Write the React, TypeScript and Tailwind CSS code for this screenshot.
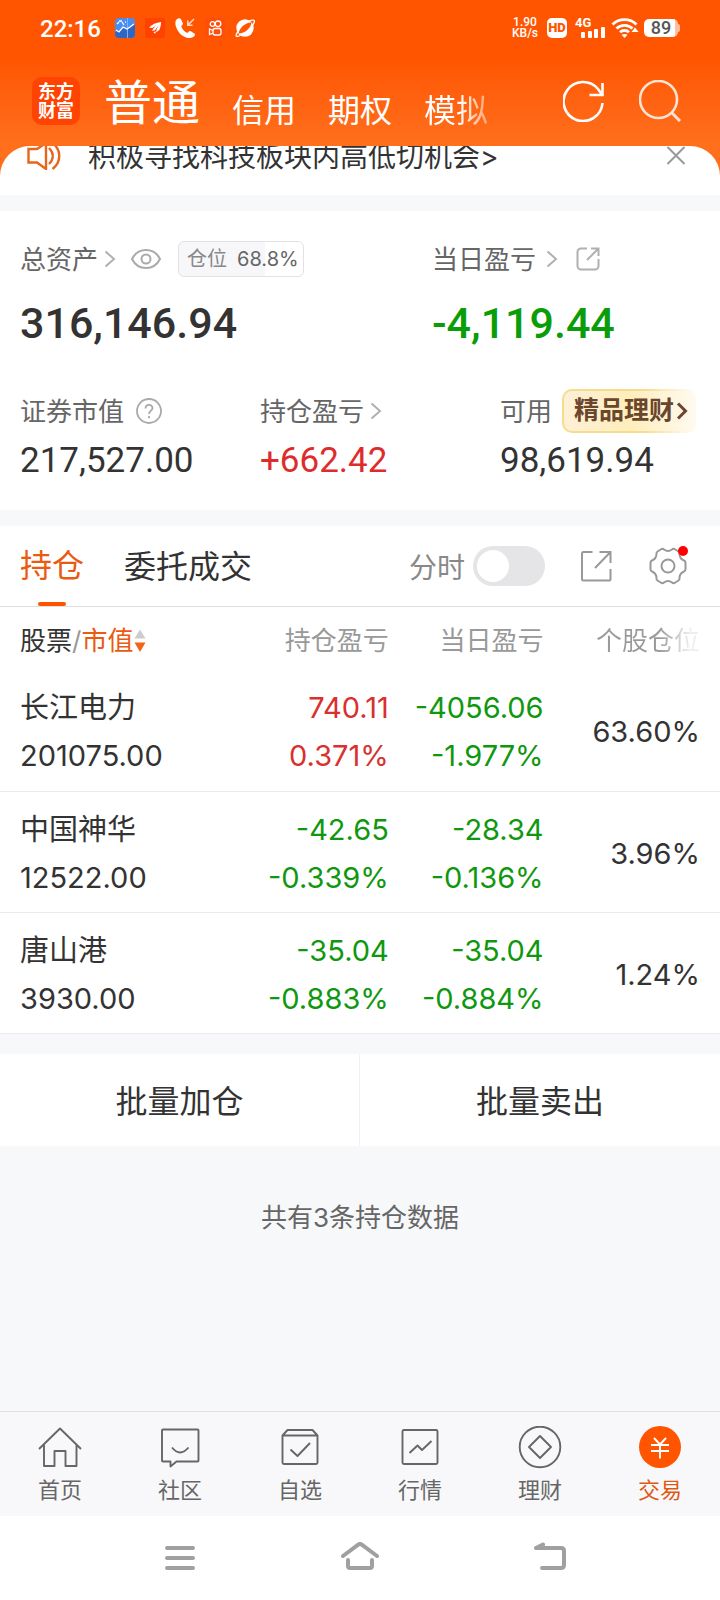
import React from "react";

type Tone = "up" | "down";
type Holding = {
  name: string;
  value: string;
  total: [string, string, Tone];
  today: [string, string, Tone];
  share: string;
};

const holdings: Holding[] = [
  { name: "长江电力", value: "201075.00", total: ["740.11", "0.371%", "up"], today: ["-4056.06", "-1.977%", "down"], share: "63.60%" },
  { name: "中国神华", value: "12522.00", total: ["-42.65", "-0.339%", "down"], today: ["-28.34", "-0.136%", "down"], share: "3.96%" },
  { name: "唐山港", value: "3930.00", total: ["-35.04", "-0.883%", "down"], today: ["-35.04", "-0.884%", "down"], share: "1.24%" },
];

const tones: Record<Tone, string> = { up: "text-[#d93030]", down: "text-[#0f980f]" };

function StatusBar() {
  return (
    <div className="flex h-14 items-center justify-between pr-10 pl-10 font-[Roboto,'Noto_Sans_CJK_SC',sans-serif]">
      <div className="flex items-center gap-[10px]">
        <span className="mr-1 pt-px text-[24px] leading-8 font-medium">22:16</span>
        <svg className="size-5" viewBox="0 0 20 20" fill="none">
          <rect width="20" height="20" rx="4" fill="#4a8df0" />
          <path d="M0 14 4 13 8 10 12 11 16 8 20 6V16a4 4 0 0 1-4 4H4a4 4 0 0 1-4-4Z" fill="#2f66c4" />
          <path d="M12.500 0V20" stroke="#7fb0f5" />
          <path d="M1 12l3 2 4-5 4 2 3-2 4-3M2 6l2-2M4 3h3M7 4l2 3M10 4h1" stroke="#fff" strokeWidth="1.300" />
        </svg>
        <svg className="size-5" viewBox="0 0 20 20">
          <rect width="20" height="20" rx="2" fill="#ff4200" />
          <path d="M16 4C11 4.500 7 6.500 4 9.500l3.500.5zM16 4C11.500 6.500 8.500 9.500 7 13l3-.8zM16 4c-2.500 3-4.500 6.500-5 10.500l3.300-2.500C15.500 9.500 16 7 16 4z" fill="#fff" />
          <path d="M8.500 14.500l2-1.500v3z" fill="#fff" />
        </svg>
        <svg className="size-5" viewBox="0 0 20 20" fill="none">
          <path d="M2.500.8C.2 2 0 5 .8 8c1.600 5.700 5.700 10.400 11.200 11.700 3 .7 6.500.3 7.800-2.200.4-.8.200-1.500-.5-2l-3.500-2.300c-.7-.4-1.400-.3-2 .3l-1.500 1.500C9.500 13.800 7 11 6.200 8.200l1.300-1.500c.4-.6.500-1.200.2-1.900L5.900 1.300C5.500.5 4.700 0 3.900.3z" fill="#fff" />
          <path d="M19 1l-6 6M12.800 2.500V7.200H17.500" stroke="#ffd9c4" strokeWidth="1.500" />
        </svg>
        <svg className="size-5" viewBox="0 0 20 20" fill="none" stroke="#fff" strokeWidth="1.300">
          <rect width="20" height="20" rx="2" fill="#ff4d0a" stroke="none" />
          <circle cx="7.500" cy="6" r="2.300" />
          <circle cx="13" cy="5.800" r="2.800" />
          <rect x="8" y="10.500" width="8" height="6.500" rx="2" />
          <path d="M8 12.500 4.500 11v5.500L8 15" />
        </svg>
        <svg className="size-5" viewBox="0 0 20 20">
          <circle cx="10" cy="10" r="8.700" fill="#fff" />
          <path d="M3.500 15.500C4.500 10 9.500 4.800 16.500 4.200 16 10 10 15.500 3.500 15.500z" fill="#ff5500" />
          <path d="M14 3.200C17.500 1.500 20 1.800 19.300 4c-.4 1.300-1.200 2.500-1.900 3.400M3 13.500C.8 16.500.3 18.800 2.600 18.400c1-.2 2-.6 3-1.200" fill="none" stroke="#fff" strokeWidth="1.300" />
        </svg>
      </div>
      <div className="flex items-center">
        <div className="flex flex-col items-center text-[12px] leading-[11px] font-medium">
          <span>1.90</span>
          <span>KB/s</span>
        </div>
        <span className="ml-[9px] flex h-5 w-5 items-center justify-center rounded-[5px] bg-white text-[13px] font-black text-[#ff5500]">HD</span>
        <div className="ml-2 flex h-5 w-8 flex-col text-[13px] leading-[9px] font-bold">
          <span>4G</span>
          <svg className="h-[11px] w-8" viewBox="0 0 32 11" fill="#fff">
            <rect x="6" y="5" width="4" height="6" rx="1" />
            <rect x="13" y="4" width="4" height="7" rx="1" />
            <rect x="19" y="2" width="4" height="9" rx="1" />
            <rect x="26" y="0" width="4" height="11" rx="1" />
          </svg>
        </div>
        <svg className="ml-1 h-5 w-7" viewBox="0 0 28 20" fill="none" stroke="#fff" strokeWidth="2.800">
          <path d="M1.500 6.500C8 0 19 0 25.500 6.500M5.500 10.500c4.500-4.300 11.500-4.300 16 0M9 14.200c2.500-2.300 6.500-2.300 9 0" />
          <path d="M10.500 16.800 13.500 20l3-3.200c-1.500-1.200-4.500-1.200-6 0z" fill="#fff" stroke="none" />
          <path d="M24 9.500 27.500 14h-7z" fill="#fff" stroke="none" />
        </svg>
        <div className="ml-[5px] flex items-center">
          <span className="flex h-[18px] w-[34px] items-center justify-center rounded-[5px] bg-gradient-to-r from-white from-90% to-[#ffbf9f] to-90% text-[18px] leading-[18px] font-medium text-[#555]">89</span>
          <span className="h-2 w-[2px] rounded-r bg-[#ffbf9f]" />
        </div>
      </div>
    </div>
  );
}

function Header() {
  return (
    <header className="bg-gradient-to-b from-[#ff5500] from-40% to-[#ff6f1c] text-white">
      <StatusBar />
      <div className="flex h-[90px] items-center pr-[39px] pl-8">
        <div className="flex size-12 flex-col items-center justify-center rounded-[10px] bg-[#ff4300] text-[18px] leading-[19px] font-bold">
          <span>东方</span>
          <span>财富</span>
        </div>
        <nav className="ml-6 flex flex-1 items-end gap-8 pt-1 pb-px">
          <button className="text-[48px] leading-[56px]">普通</button>
          <button className="text-[32px] leading-10">信用</button>
          <button className="text-[32px] leading-10">期权</button>
          <button className="bg-gradient-to-r from-white from-55% to-white/40 bg-clip-text text-[32px] leading-10 text-transparent">模拟</button>
        </nav>
        <button aria-label="刷新">
          <svg className="size-[42px]" viewBox="0 0 42 42" fill="none" stroke="#fff" strokeWidth="2.600">
            <path d="M39.500 23A19.500 19.500 0 1 1 35 9L39 14.500" />
            <path d="M39.500 3V15H26.500" />
          </svg>
        </button>
        <button aria-label="搜索" className="ml-[34px]">
          <svg className="size-[42px]" viewBox="0 0 42 42" fill="none" stroke="#ffe3d3" strokeWidth="2.600">
            <circle cx="19.500" cy="19.500" r="18.500" />
            <path d="M32.500 32.500 41 41" strokeWidth="3" />
          </svg>
        </button>
      </div>
    </header>
  );
}

function Notice() {
  return (
    <div className="bg-[#ff6f1c]">
      <div className="flex h-[49px] items-start overflow-hidden rounded-t-[30px] bg-white pr-[34px] pl-[26px]">
        <svg className="-mt-1 h-7 w-9 shrink-0" viewBox="0 0 36 28" fill="none" stroke="#e8651c" strokeWidth="2.400">
          <path d="M2.500 7H11L20 1V27L11 20.500H2.500Z" />
          <path d="M23 6c5 5 5 11 0 16M26.500 1c9 7 9 19 0 26" />
        </svg>
        <p className="-mt-[9px] ml-[26px] flex-1 text-[28px] leading-10 whitespace-nowrap text-[#333]">积极寻找科技板块内高低切机会&gt;</p>
        <button aria-label="关闭">
          <svg className="size-5" viewBox="0 0 20 20" stroke="#999" strokeWidth="2">
            <path d="M1.500 1 18.500 18M18.500 1 1.500 18" />
          </svg>
        </button>
      </div>
    </div>
  );
}

function Chevron() {
  return (
    <svg className="h-[18px] w-3" viewBox="0 0 12 18" fill="none" stroke="#b0b0b0" strokeWidth="2">
      <path d="M1.500 1.500 10 9 1.500 16.500" />
    </svg>
  );
}

function Summary() {
  return (
    <section className="bg-white pt-7 pb-[29px] text-[26px] text-[#666]">
      <div className="grid grid-cols-[3fr_2fr]">
        <div className="pl-5">
          <div className="flex h-10 items-center">
            <span>总资产</span>
            <span className="ml-[6px]"><Chevron /></span>
            <button aria-label="显示资产" className="ml-[15px]">
              <svg className="h-5 w-[30px]" viewBox="0 0 30 20" fill="none" stroke="#aaa" strokeWidth="2">
                <path d="M1 10C7-2 23-2 29 10 23 22 7 22 1 10z" />
                <circle cx="15" cy="10" r="4.500" />
              </svg>
            </button>
            <span className="ml-[17px] flex h-9 items-center gap-[10px] rounded-md border border-[#e2e2e4] bg-gradient-to-r from-[#f7f7fa] from-69% to-white to-69% pr-1 pl-2 text-[20px]">
              <span className="text-[#888]">仓位</span>
              <span>68.8%</span>
            </span>
          </div>
          <p className="mt-5 font-[Roboto,sans-serif] text-[43px] leading-[48px] font-medium text-[#333]">316,146.94</p>
        </div>
        <div>
          <div className="flex h-10 items-center">
            <span>当日盈亏</span>
            <span className="ml-[10px]"><Chevron /></span>
            <button aria-label="分享" className="ml-[18px]">
              <svg className="size-6" viewBox="0 0 24 24" fill="none" stroke="#b0b0b0" strokeWidth="2">
                <path d="M11 1.500H5A3.500 3.500 0 0 0 1.500 5V19A3.500 3.500 0 0 0 5 22.500H19A3.500 3.500 0 0 0 22.500 19V12M11 13 22.500 1.500M15 1.500H22.500V9" />
              </svg>
            </button>
          </div>
          <p className="mt-5 font-[Roboto,sans-serif] text-[43px] leading-[48px] font-medium text-[#0a9d0a]">-4,119.44</p>
        </div>
      </div>
      <div className="mt-[42px] grid grid-cols-3">
        <div className="pl-5">
          <div className="flex h-11 items-center">
            <span>证券市值</span>
            <button aria-label="说明" className="ml-3">
              <svg className="size-[26px]" viewBox="0 0 26 26" fill="none" stroke="#aaa" strokeWidth="1.800">
                <circle cx="13" cy="13" r="12" />
                <path d="M9.500 10.500C9.500 5.800 16.500 5.800 16.500 10.200 16.500 12.500 13 13 13 16M13 18V20.200" />
              </svg>
            </button>
          </div>
          <p className="mt-2 font-[Roboto,sans-serif] text-[35px] leading-10 text-[#333]">217,527.00</p>
        </div>
        <div className="pl-5">
          <div className="flex h-11 items-center">
            <span>持仓盈亏</span>
            <span className="ml-[6px]"><Chevron /></span>
          </div>
          <p className="mt-2 font-[Roboto,sans-serif] text-[35px] leading-10 text-[#de2c2c]">+662.42</p>
        </div>
        <div className="pl-5">
          <div className="flex h-11 items-center">
            <span>可用</span>
            <button className="ml-[10px] flex h-11 items-center rounded-[10px] bg-gradient-to-r from-[#f5dd8e] from-60% to-white p-[2px] text-[25px] font-bold text-[#6b452c]">
              <span className="flex h-10 items-center gap-[2px] rounded-lg bg-gradient-to-r from-[#fdf0d6] via-[#feeebb] to-[#fffaf0] pr-2 pl-[10px] whitespace-nowrap">
                精品理财
                <svg className="h-[18px] w-3" viewBox="0 0 12 18" fill="none" stroke="#6b452c" strokeWidth="3">
                  <path d="M2 1.500 9.500 9 2 16.500" />
                </svg>
              </span>
            </button>
          </div>
          <p className="mt-2 font-[Roboto,sans-serif] text-[35px] leading-10 text-[#333]">98,619.94</p>
        </div>
      </div>
    </section>
  );
}

function Toolbar() {
  return (
    <div className="flex h-[81px] items-stretch border-b border-[#dfdfe1] bg-white pr-[33px] pl-5 text-[32px] text-[#333]">
      <button className="flex flex-col items-center text-[#ea5a10]">
        <span className="flex flex-1 items-center pt-1">持仓</span>
        <span className="h-1 w-7 rounded-sm bg-[#ff5500]" />
      </button>
      <button className="ml-10 pt-px">委托成交</button>
      <div className="ml-auto flex items-center">
        <label htmlFor="intraday" className="pt-1 text-[28px] text-[#888]">分时</label>
        <input
          id="intraday"
          type="checkbox"
          className="ml-2 h-10 w-[72px] appearance-none rounded-full bg-[#e5e5e7] p-1 before:block before:size-8 before:rounded-full before:bg-white checked:bg-[#ff5500] checked:before:ml-8"
        />
        <button aria-label="分享持仓" className="ml-[35px]">
          <svg className="size-8" viewBox="0 0 32 32" fill="none" stroke="#999" strokeWidth="2">
            <path d="M12.500 2H3.500Q2 2 2 3.500V29Q2 30.500 3.500 30.500H29Q30.500 30.500 30.500 29V19M30.500 13V2H19.500M30 2.500 15 18" />
          </svg>
        </button>
        <button aria-label="设置" className="relative ml-[37px]">
          <svg className="size-[38px]" viewBox="0 0 38 38" fill="none" stroke="#999" strokeWidth="2" strokeLinejoin="round">
            <path d="M12.500 2Q14 1.500 15 2.500Q19 5.500 23 2.500Q24 1.500 25.500 2L29.500 4.500Q30.700 5.300 30.500 6.800Q30.500 11.800 35 13.500Q36.500 14.200 36.500 15.700V22.300Q36.500 23.800 35 24.500Q30.500 26.200 30.500 31.200Q30.700 32.700 29.500 33.500L25.500 36Q24 36.500 23 35.500Q19 32.500 15 35.500Q14 36.500 12.500 36L8.500 33.500Q7.300 32.700 7.500 31.200Q7.500 26.200 3 24.500Q1.500 23.800 1.500 22.300V15.700Q1.500 14.200 3 13.500Q7.500 11.800 7.500 6.800Q7.300 5.300 8.500 4.500Z" />
            <circle cx="19" cy="19" r="6.500" />
          </svg>
          <span className="absolute -top-px -right-px size-[10px] rounded-full bg-[#ff0000]" />
        </button>
      </div>
    </div>
  );
}

function Pair({ data }: { data: [string, string, Tone] }) {
  return (
    <div className={tones[data[2]]}>
      <div>{data[0]}</div>
      <div>{data[1]}</div>
    </div>
  );
}

function Holdings() {
  return (
    <table className="w-full table-fixed border-collapse bg-white text-right text-[#333]">
      <thead>
        <tr className="h-[63px] text-[26px] text-[#999]">
          <th className="w-[30%] pt-1 pl-5 text-left font-normal whitespace-nowrap">
            <button className="flex items-center">
              <span className="text-[#333]">股票</span>/<span className="text-[#ea5a10]">市值</span>
              <svg className="ml-px h-6 w-3" viewBox="0 0 12 24">
                <path d="M6 .5 11.500 9.500H.5Z" fill="#ccc" />
                <path d="M6 23 11.500 13.500H.5Z" fill="#f26419" />
              </svg>
            </button>
          </th>
          <th className="w-[24%] pt-1 font-normal">持仓盈亏</th>
          <th className="w-[21.500%] pt-1 font-normal">当日盈亏</th>
          <th className="pt-1 pr-5 font-normal">
            <span className="bg-gradient-to-r from-[#999] from-60% to-[#eee] to-90% bg-clip-text text-transparent">个股仓位</span>
          </th>
        </tr>
      </thead>
      <tbody>
        {holdings.map((h) => (
          <tr key={h.name} className="h-[121px] border-b border-[#ebebed] text-[29px] leading-[48px]">
            <td className="pt-1 pl-5 text-left">
              <div>{h.name}</div>
              <div>{h.value}</div>
            </td>
            <td className="pt-1"><Pair data={h.total} /></td>
            <td className="pt-1"><Pair data={h.today} /></td>
            <td className="pt-1 pr-5">{h.share}</td>
          </tr>
        ))}
      </tbody>
    </table>
  );
}

const tabs = [
  { label: "首页", art: <path d="M1 23 22 2.500 43 23M6 19V40H16.500V25H27.500V40H38.500V19" /> },
  { label: "社区", art: <path d="M5 3.500H39.500Q40.500 3.500 40.500 4.500V34.500Q40.500 35.500 39.500 35.500H18.500L12.500 40.500V35.500H5Q4 35.500 4 34.500V4.500Q4 3.500 5 3.500ZM14 21.500Q22 31.500 30.500 21.500" /> },
  { label: "自选", art: <path d="M4.500 9.500 9.500 4H34.500L39.500 9.500V36.500Q39.500 38 38 38H6Q4.500 38 4.500 36.500ZM4.500 9.500H39.500M12.500 23.500 19.500 30 32 17" /> },
  { label: "行情", art: <path d="M6 4H38Q39.500 4 39.500 5.500V36.500Q39.500 38 38 38H6Q4.500 38 4.500 36.500V5.500Q4.500 4 6 4ZM11.500 27 19.500 19.500 24 24 33.500 15" /> },
  { label: "理财", art: <><circle cx="22" cy="21" r="20.300" /><path d="M22 10 33 21 22 32 11 21Z" /></> },
];

function TabBar() {
  return (
    <nav className="grid grid-cols-6 border-t border-[#dfdfe1] bg-[#f8f8fa] pt-[14px] pb-[11px] text-[22px] leading-[30px] text-[#666]">
      {tabs.map((t) => (
        <a key={t.label} href="#" className="flex flex-col items-center gap-[5px]">
          <svg className="size-11" viewBox="0 0 44 44" fill="none" stroke="#666" strokeWidth="1.900" strokeLinejoin="round">{t.art}</svg>
          {t.label}
        </a>
      ))}
      <a href="#" aria-current="page" className="flex flex-col items-center gap-[5px] text-[#dd5a14]">
        <svg className="size-11" viewBox="0 0 44 44" fill="none" stroke="#fff" strokeWidth="1.900">
          <circle cx="22" cy="21" r="21" fill="#ff5500" stroke="none" />
          <path d="M16 12 22 18.500 28 12M22 18.500V32.500M13 19H31M13 25H31" />
        </svg>
        交易
      </a>
    </nav>
  );
}

function SystemBar() {
  return (
    <div className="grid h-[84px] grid-cols-3 place-items-center bg-white px-[12.500%]">
      <button aria-label="最近任务">
        <svg className="h-7 w-10" viewBox="0 0 40 28" fill="none" stroke="#a0a0a0" strokeWidth="4" strokeLinecap="round">
          <path d="M7 4H33M7 14H33M7 24H33" />
        </svg>
      </button>
      <button aria-label="主屏幕">
        <svg className="h-8 w-10" viewBox="0 0 40 32" fill="none" stroke="#a0a0a0" strokeWidth="4" strokeLinecap="round">
          <path d="M3 14 18.500 2.500Q20 1.500 21.500 2.500L37 14M8 18V24Q8 26 10 26H30Q32 26 32 24V18" />
        </svg>
      </button>
      <button aria-label="返回">
        <svg className="h-8 w-[60px]" viewBox="0 0 60 32" fill="none" stroke="#a0a0a0" strokeWidth="4" strokeLinecap="round" strokeLinejoin="round">
          <path d="M33 2.500 26 6H51Q54 6 54 9V23Q54 26 51 26H32" />
        </svg>
      </button>
    </div>
  );
}

export default function App() {
  return (
    <div className="flex min-h-screen flex-col bg-[#f7f8fa] font-[Inter,'Noto_Sans_CJK_SC',sans-serif]">
      <Header />
      <main className="flex-1">
        <Notice />
        <div className="h-4" />
        <Summary />
        <div className="h-4" />
        <Toolbar />
        <Holdings />
        <div className="mt-5 grid h-[92px] grid-cols-2 divide-x divide-[#f0f0f2] bg-white text-[32px] text-[#333]">
          <button className="pt-1">批量加仓</button>
          <button className="pt-1">批量卖出</button>
        </div>
        <p className="mt-[52px] text-center text-[26px] leading-10 text-[#666]">共有3条持仓数据</p>
      </main>
      <TabBar />
      <SystemBar />
    </div>
  );
}
